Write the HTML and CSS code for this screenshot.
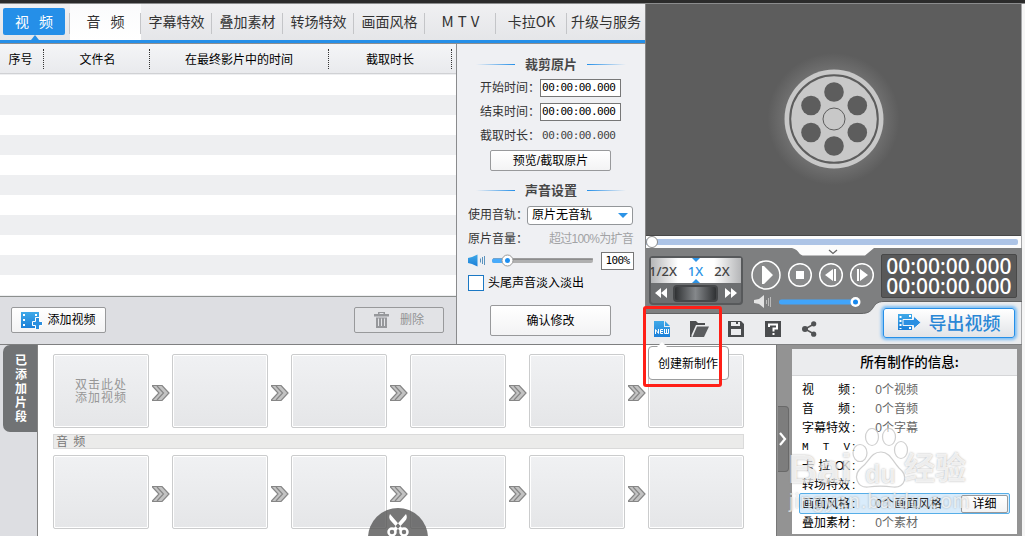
FILE: index.html
```html
<!DOCTYPE html>
<html lang="zh-CN">
<head>
    <meta charset="utf-8">
    <title>视频编辑</title>
    <link rel="stylesheet" href="styles.css">
</head>

<body>

    <svg class="defs" width="0" height="0">
        <defs>
            <linearGradient id="blue" x1="0" y1="0" x2="0" y2="1">
                <stop offset="0" stop-color="#3fa9e8"></stop>
                <stop offset="1" stop-color="#1c7fd8"></stop>
            </linearGradient>
            <symbol id="arrow" viewBox="0 0 18 16">
                <path d="M.5 .5H10L17 8L10 15.500H.5L7 8Z" fill="#c3c3c3"></path>
                <path d="M0 .5H10L17 8L10 15.500H0M0 .5L7 8L0 15.500M5 1L11.500 8L5 15" fill="none" stroke="#868686" stroke-width="1.200"></path>
            </symbol>
        </defs>
    </svg>

    <div class="app">
        <div class="titlebar"></div>

        <div class="upper">
            <!-- left side: tabs, file list and settings -->
            <div class="left">
                <div class="tabs">
                    <div class="tab active"><span>视&ensp; 频</span></div>
                    <div class="tab light">音&ensp; 频</div>
                    <div class="tab">字幕特效</div>
                    <div class="tab">叠加素材</div>
                    <div class="tab">转场特效</div>
                    <div class="tab">画面风格</div>
                    <div class="tab mtv">MTV</div>
                    <div class="tab">卡拉OK</div>
                    <div class="tab last">升级与服务</div>
                </div>

                <div class="work">
                    <div class="files">
                        <div class="file-head">
                            <div class="c1">序号</div>
                            <div class="c2">文件名</div>
                            <div class="c3">在最终影片中的时间</div>
                            <div class="c4">截取时长</div>
                        </div>
                        <div class="file-rows"></div>
                        <div class="file-foot">
                            <div class="btn add">
                                <svg width="22" height="17" viewBox="0 0 22 17">
                                    <rect x="0" y="0" width="18" height="16" fill="url(#blue)"></rect>
                                    <path d="M2 2h2v2H2zM2 7h2v2H2zM2 12h2v2H2zM14 2h2v2h-2z" fill="#fff"></path>
                                    <path d="M14.500 5.500h4v4h3v4h-3v4h-4v-4h-3v-4h3z" fill="#2b8fe0" stroke="#fff" stroke-width="1"></path>
                                </svg>
                                添加视频
                            </div>
                            <div class="btn del">
                                <svg width="15" height="17" viewBox="0 0 15 17" fill="#96989b">
                                    <path d="M4 2V0h7v2h4v2.500H0V2zM5.500 2h4V1h-4z" fill-rule="evenodd"></path>
                                    <path d="M2 5.500h11V16H2zM4 6.500V14h1V6.500zM7 6.500V14h1V6.500zM10 6.500V14h1V6.500z" fill-rule="evenodd"></path>
                                </svg>
                                删除
                            </div>
                        </div>
                    </div>

                    <div class="settings">
                        <div class="heading"><i></i>裁剪原片<i class="r"></i></div>
                        <div class="line">开始时间：<div class="time">00:00:00.000</div></div>
                        <div class="line">结束时间：<div class="time">00:00:00.000</div></div>
                        <div class="line">截取时长：<div class="time plain">00:00:00.000</div></div>
                        <div class="btn preview">预览/截取原片</div>
                        <div class="heading sound"><i></i>声音设置<i class="r"></i></div>
                        <div class="line wide">使用音轨：<div class="select">原片无音轨<b></b></div></div>
                        <div class="line wide">原片音量：<span class="hint">超过100%为扩音</span></div>
                        <div class="line wide volume">
                            <svg width="127" height="16" viewBox="0 0 127 16">
                                <path d="M0 5L4 4L9.500 1.500V13.500L4 11L0 10Z" fill="url(#blue)"></path>
                                <path d="M12.500 5.500v4M14.500 4v7M16.500 3v9" stroke="#5b93be"></path>
                                <rect x="24" y="5.500" width="101" height="4.500" rx="2" fill="#b0b0b0"></rect>
                                <path d="M25 6h100" stroke="#6b6b6b"></path>
                                <rect x="24" y="5.500" width="13" height="4.500" rx="2" fill="#49abfb"></rect>
                                <circle cx="39.500" cy="7.500" r="5.500" fill="#fff" stroke="#999"></circle>
                                <circle cx="39.500" cy="7.500" r="2.500" fill="#1f8ff0"></circle>
                            </svg>
                            <div class="percent">100%</div>
                        </div>
                        <div class="line wide fade"><span class="check"></span>头尾声音淡入淡出</div>
                        <div class="btn confirm">确认修改</div>
                    </div>
                </div>
            </div>

            <!-- right side: preview and player -->
            <div class="right">
                <div class="screen">
                    <svg width="120" height="120" viewBox="0 0 120 120">
                        <circle cx="60" cy="60" r="49.500" fill="#c8c8c8"></circle>
                        <circle cx="60" cy="60" r="43.800" fill="none" stroke="#5d5d5d" stroke-width="2"></circle>
                        <g fill="#5d5d5d">
                            <circle cx="60" cy="33" r="9.800"></circle>
                            <circle cx="83.300" cy="46.500" r="9.800"></circle>
                            <circle cx="83.300" cy="73.500" r="9.800"></circle>
                            <circle cx="60" cy="87" r="9.800"></circle>
                            <circle cx="37" cy="73.500" r="9.800"></circle>
                            <circle cx="37" cy="46.500" r="9.800"></circle>
                        </g>
                        <circle cx="60" cy="60" r="11" fill="none" stroke="#5d5d5d" stroke-width="1"></circle>
                    </svg>
                </div>
                <div class="seek"><div class="bar"></div><span class="knob"></span></div>
                <div class="player">
                    <svg class="player-bg" width="376" height="97" viewBox="0 0 376 97">
                        <path d="M0 0H376V53.500H238C224 53.500 231 65.500 215 65.500H0Z" fill="#7e7f80"></path>
                        <path d="M376 53.500H238C224 53.500 231 65.500 215 65.500H0" fill="none" stroke="#626364"></path>
                        <path d="M146 0H228L219 7.500H158C152 7.500 154 2 146 0Z" fill="#fcfcfc"></path>
                        <path d="M183 2L187 5.500L191 2" fill="none" stroke="#666" stroke-width="1.300"></path>
                    </svg>
                    <div class="controls">
                        <div class="speed">
                            <div class="rates"><span>1/2X</span><span class="on">1X</span><span>2X</span></div>
                            <div class="shuttle">
                                <svg width="12" height="10" viewBox="0 0 12 10"><path d="M6 0V10L0 5ZM12 0V10L6 5Z" fill="#fff"></path></svg>
                                <div class="dial"></div>
                                <svg width="12" height="10" viewBox="0 0 12 10"><path d="M0 0V10L6 5ZM6 0V10L12 5Z" fill="#fff"></path></svg>
                            </div>
                        </div>
                        <svg class="buttons" width="130" height="56" viewBox="0 0 130 56">
                            <g fill="#898a8b" stroke="#fff" stroke-width="1.500">
                                <circle cx="20" cy="19" r="14"></circle>
                                <circle cx="54" cy="19" r="11.300"></circle>
                                <circle cx="85" cy="19" r="11.300"></circle>
                                <circle cx="116" cy="19" r="11.300"></circle>
                            </g>
                            <path d="M16 10h2l9 9l-9 9h-2zM50 15h8v8h-8zM79 19l8-6v12zM88 13h2v12h-2zM122 19l-8-6v12zM111 13h2v12h-2z" fill="#fff"></path>
                            <path d="M8 44l5-1l5-4v13l-5-4l-5-1z" fill="#e4e4e4"></path>
                            <path d="M20.500 44v4M22.500 42v8M24.500 41v10" stroke="#bbb"></path>
                            <rect x="33" y="43.500" width="80" height="5" rx="2.500" fill="#42a5fa"></rect>
                            <circle cx="109.500" cy="46" r="5" fill="#fff"></circle>
                            <circle cx="109.500" cy="46" r="2.500" fill="#1688ee"></circle>
                        </svg>
                        <div class="clock"><div>00:00:00.000</div><div>00:00:00.000</div></div>
                    </div>
                    <div class="toolbar">
                        <svg width="17" height="17" viewBox="0 0 17 17">
                            <path d="M0 0H10V6H16V16H0ZM11 0L16 5H11Z" fill="url(#blue)"></path>
                            <path d="M1.500 13V8.500L4.500 12.500V8M9 8.500H6.500V12.500H9M6.500 10.500H9M10.500 8V12.500H14.500V8M12.500 8V12" fill="none" stroke="#fff"></path>
                        </svg>
                        <svg width="19" height="17" viewBox="0 0 19 17">
                            <path d="M0 0H6L8 2H15V4H6L1.500 14V16H0Z" fill="#4c4e50"></path>
                            <path d="M7 5.500H19L14 16H2.500Z" fill="#5b5d5f"></path>
                        </svg>
                        <svg width="18" height="17" viewBox="0 0 18 17">
                            <path d="M0 0H13L16 3V16H0ZM3 1V5H12V1ZM3 8V14H13V8Z" fill="#4a4c4e" fill-rule="evenodd"></path>
                            <path d="M8 0h2v3H8z" fill="#4a4c4e"></path>
                        </svg>
                        <svg width="18" height="17" viewBox="0 0 18 17">
                            <path d="M0 0H16V16H0Z" fill="#4a4c4e"></path>
                            <path d="M4 6V3.500H12V7.500H8.500V10.500M8.500 12V14" fill="none" stroke="#fff" stroke-width="2"></path>
                        </svg>
                        <svg width="15" height="17" viewBox="0 0 15 17">
                            <path d="M12 3L3 8L12 13" fill="none" stroke="#555" stroke-width="1.500"></path>
                            <g fill="#505254"><circle cx="11.700" cy="2.800" r="2.600"></circle><circle cx="3" cy="8" r="3"></circle><circle cx="11.700" cy="13.200" r="2.600"></circle></g>
                        </svg>
                    </div>
                    <div class="export">
                        <svg width="24" height="17" viewBox="0 0 24 17">
                            <path d="M0 0H14V16H0Z" fill="url(#blue)"></path>
                            <path d="M1.500 2h2v2h-2zM1.500 6h2v2h-2zM1.500 10h2v2h-2zM1.500 14h2v1h-2zM11 1h2v2h-2zM11 13h2v2h-2z" fill="#fff"></path>
                            <path d="M5 5.500H15.500V2L23 8.500L15.500 15V11.500H5Z" fill="#2b8fe2" stroke="#f4f6f9"></path>
                        </svg>
                        导出视频
                    </div>
                </div>
            </div>
        </div>

        <div class="lower">
            <div class="side"><div class="side-tab">已添加片段</div></div>

            <div class="timeline">
                <div class="clips">
                    <div class="clip">双击此处<br>添加视频</div>
                    <svg><use href="#arrow"></use></svg>
                    <div class="clip"></div>
                    <svg><use href="#arrow"></use></svg>
                    <div class="clip"></div>
                    <svg><use href="#arrow"></use></svg>
                    <div class="clip"></div>
                    <svg><use href="#arrow"></use></svg>
                    <div class="clip"></div>
                    <svg><use href="#arrow"></use></svg>
                    <div class="clip"></div>
                </div>
                <div class="audio">音 频</div>
                <div class="clips">
                    <div class="clip"></div>
                    <svg><use href="#arrow"></use></svg>
                    <div class="clip"></div>
                    <svg><use href="#arrow"></use></svg>
                    <div class="clip"></div>
                    <svg><use href="#arrow"></use></svg>
                    <div class="clip"></div>
                    <svg><use href="#arrow"></use></svg>
                    <div class="clip"></div>
                    <svg><use href="#arrow"></use></svg>
                    <div class="clip"></div>
                </div>
            </div>

            <div class="info">
                <div class="handle">
                    <svg width="8" height="14" viewBox="0 0 8 14"><path d="M1 1L6 7L1 13" fill="none" stroke="#fff" stroke-width="2.200"></path></svg>
                </div>
                <div class="card">
                    <div class="card-title">所有制作的信息:</div>
                    <div class="item"><div class="name"><span>视</span><span>频</span></div>:<em>0个视频</em></div>
                    <div class="item"><div class="name"><span>音</span><span>频</span></div>:<em>0个音频</em></div>
                    <div class="item"><div class="name">字幕特效</div>:<em>0个字幕</em></div>
                    <div class="item"><div class="name mono"><span>M</span><span>T</span><span>V</span></div>:</div>
                    <div class="item"><div class="name"><span>卡</span><span>拉</span><span class="ok">OK</span></div>:</div>
                    <div class="item"><div class="name">转场特效</div>:</div>
                    <div class="item selected"><div class="name">画面风格</div>:<em>0个画面风格</em><div class="btn detail">详细</div></div>
                    <div class="item"><div class="name">叠加素材</div>:<em>0个素材</em></div>
                </div>
            </div>
        </div>

        <!-- things floating over the window -->
        <div class="tip">创建新制作</div>
        <div class="mark"></div>
        <div class="scissors">
            <svg width="22" height="24" viewBox="0 0 22 24">
                <path d="M3 0Q1 4 4 7L13 17L16 15ZM19 0Q21 4 18 7L9 17L6 15Z" fill="#fff"></path>
                <circle cx="5" cy="18" r="3.500" fill="none" stroke="#fff" stroke-width="2.500"></circle>
                <circle cx="17" cy="18" r="3.500" fill="none" stroke="#fff" stroke-width="2.500"></circle>
            </svg>
        </div>
        <div class="watermark">
            <svg class="paw" width="60" height="62" viewBox="0 0 60 62">
                <g fill="#fff" fill-opacity=".7" stroke="#c4c4c4" stroke-width="1.200">
                    <ellipse cx="9" cy="25" rx="7" ry="8.500"></ellipse>
                    <ellipse cx="21" cy="9" rx="6.500" ry="8.500"></ellipse>
                    <ellipse cx="38" cy="9" rx="6.500" ry="8.500"></ellipse>
                    <ellipse cx="50" cy="22" rx="6.500" ry="8.500"></ellipse>
                    <path d="M30 24C20 24 18 34 11 39C1 47 6 60 17 59C25 58 34 58 42 59C54 60 58 48 48 40C42 34 39 24 30 24Z"></path>
                </g>
            </svg>
            <span class="bai">Bai</span><span class="du">du</span><span class="jy">经验</span>
            <span class="url">jingyan.baidu.com</span>
        </div>
    </div>

</body>
</html>
```
FILE: styles.css
```css
* {
    box-sizing: border-box;
}

body {
    margin: 0;
    width: 1025px;
    height: 536px;
    overflow: hidden;
    background: #f6f6f6;
    font-family: "Liberation Sans", "Noto Sans CJK SC", sans-serif;
    font-size: 12px;
    line-height: 16px;
    color: #000;
}

.defs {
    position: absolute;
}

.app {
    position: relative;
    width: 1025px;
    height: 536px;
    overflow: hidden;
}

.titlebar {
    height: 4px;
    background: #2b2b2b;
    border-bottom: 1px solid #8b8c8d;
}

.upper {
    display: flex;
    width: 1022px;
    height: 341px;
    border-bottom: 1px solid #7e7f80;
}

.left {
    width: 646px;
    border-right: 1px solid #858585;
}

/* tabs */
.tabs {
    display: flex;
    height: 40px;
    background: linear-gradient(#f0f0f2, #e4e5e8);
    border-bottom: 1px solid #8c8e90;
    box-shadow: inset 0 -3px #258fe8;
    padding-bottom: 5px;
    font-family: "Noto Sans CJK SC", sans-serif;
    font-size: 14px;
    color: #333;
}

.tab {
    position: relative;
    flex: 0 0 71px;
    display: flex;
    align-items: center;
    justify-content: center;
    white-space: pre;
}

.tab:not(.last)::after {
    content: "";
    position: absolute;
    right: 0;
    top: 9px;
    width: 1px;
    height: 21px;
    background: #c4c5c8;
}

.tab.active {
    flex-basis: 70px;
    align-items: flex-start;
    padding: 4px 2px 0 0;
}

.active span {
    width: 62px;
    height: 27px;
    line-height: 26px;
    text-align: center;
    background: #258fe8;
    border-radius: 2px;
    color: #fff;
}

.active::before {
    content: "";
    position: absolute;
    left: 31px;
    top: 31px;
    border: 4px solid transparent;
    border-top: 0;
    border-bottom: 5px solid #258fe8;
}

.tab.light {
    background: linear-gradient(#fafbfc, #fff);
    margin-bottom: -2px;
    padding-bottom: 2px;
}

.tab.mtv {
    font-size: 15px;
    letter-spacing: 4px;
    padding-left: 4px;
}

.tab.last {
    flex-basis: 78px;
}

.work {
    display: flex;
    height: 300px;
}

/* file list */
.files {
    width: 457px;
    border-right: 1px solid #8a8b8d;
}

.file-head {
    display: flex;
    height: 30px;
    align-items: center;
    background: linear-gradient(#f4f5f7, #e9eaed);
    border-bottom: 1px solid #d0d1d4;
    text-align: center;
}

.file-head div {
    height: 20px;
    line-height: 22px;
    border-right: 1px dotted #333;
}

.c1 {
    width: 44px;
    padding-right: 2px;
}

.c2 {
    width: 106px;
    padding-left: 2px;
}

.c3 {
    width: 179px;
}

.c4 {
    width: 123px;
}

.file-rows {
    height: 223px;
    border-bottom: 1px solid #8c8f8e;
    background: repeating-linear-gradient(#eeeff1 0 1px, #fff 1px 21px, #eeeff1 21px 40px);
}

.file-foot {
    display: flex;
    justify-content: space-between;
    height: 47px;
    padding: 10px 12px 0 11px;
    background: #dddee2;
}

.btn {
    display: flex;
    align-items: center;
    justify-content: center;
    border: 1px solid #98999b;
    border-radius: 2px;
    background: linear-gradient(#fff, #f3f3f4);
}

.add {
    width: 95px;
    height: 26px;
    gap: 4px;
}

.del {
    width: 90px;
    height: 26px;
    gap: 11px;
    background: #e2e3e6;
    color: #929395;
}

/* settings */
.settings {
    width: 188px;
    background: #eff0f3;
    color: #333;
}

.heading {
    display: flex;
    align-items: center;
    justify-content: center;
    gap: 10px;
    height: 20px;
    margin: 11px 0 1px;
    font-size: 13px;
    font-weight: bold;
    color: #484848;
}

.heading i {
    width: 39px;
    height: 1px;
    margin-top: -1px;
    background: linear-gradient(to right, #eff0f3, #258fe8);
}

.heading i.r {
    background: linear-gradient(to left, #eff0f3, #258fe8);
}

.line {
    display: flex;
    align-items: center;
    height: 24px;
    padding-left: 23px;
}

.line.wide {
    padding-left: 11px;
}

.time {
    width: 81px;
    height: 18px;
    line-height: 16px;
    padding-left: 1px;
    border: 1px solid #777;
    background: #fff;
    font-family: "DejaVu Sans Mono", monospace;
    font-size: 11px;
    letter-spacing: -.5px;
    color: #000;
}

.time.plain {
    background: none;
    border-color: transparent;
    color: #444;
}

.preview {
    width: 121px;
    height: 21px;
    margin: 2px 0 0 33px;
    color: #000;
}

.heading.sound {
    margin: 10px 0 2px;
}

.select {
    display: flex;
    align-items: center;
    justify-content: space-between;
    width: 106px;
    height: 19px;
    margin-left: -1px;
    padding: 0 4px;
    border: 1px solid #939699;
    border-radius: 3px;
    background: #fff;
    color: #000;
}

.select b {
    border: 5px solid transparent;
    border-top-color: #2c93e6;
    border-bottom: 0;
}

.hint {
    margin-left: 21px;
    white-space: nowrap;
    letter-spacing: -.75px;
    color: #a2a3a5;
}

.volume {
    height: 20px;
    gap: 6px;
}

.percent {
    width: 33px;
    height: 18px;
    border: 1px solid #777;
    background: #fff;
    text-align: center;
    line-height: 16px;
    font-family: "DejaVu Sans Mono", monospace;
    font-size: 11px;
    letter-spacing: -.6px;
    color: #000;
}

.fade {
    gap: 4px;
    color: #000;
}

.check {
    width: 16px;
    height: 16px;
    border: 1px solid #1b78c4;
    background: #fff;
}

.confirm {
    width: 121px;
    height: 31px;
    margin: 10px 0 0 33px;
    color: #000;
}

/* preview */
.right {
    width: 376px;
    border-right: 1px solid #a5a6a8;
}

.screen {
    height: 232px;
    display: flex;
    justify-content: center;
    padding-top: 55px;
    background: radial-gradient(circle at 50% 115px, #747474 45px, #5d5d5d 66px);
    border-bottom: 1px solid #484848;
}

.seek {
    position: relative;
    height: 12px;
    padding: 3px 3px 0 0;
    background: #fcfcfc;
}

.bar {
    height: 6px;
    background: #adc4e6;
    border-radius: 0 2px 2px 0;
}

.knob {
    position: absolute;
    left: 0;
    top: 0;
    width: 12px;
    height: 12px;
    border: 1px solid #8a8a8a;
    border-radius: 50%;
    background: #fff;
}

.player {
    position: relative;
    height: 96px;
    background: #ebecee;
}

.player-bg {
    position: absolute;
    left: 0;
    top: 0;
}

.controls {
    position: relative;
    display: flex;
    height: 66px;
    padding: 8px 4px 0 3px;
}

.speed {
    width: 94px;
    height: 49px;
    border: 2px solid #57595b;
    border-radius: 4px;
    background: #6d6f71;
}

.rates {
    position: relative;
    display: flex;
    align-items: center;
    height: 25px;
    gap: 11px;
    overflow: hidden;
    background: linear-gradient(to right, #b5b6b8, #fff 30%, #fff 70%, #b5b6b8);
    font-family: "Noto Sans", sans-serif;
    font-size: 13px;
    font-weight: 500;
    color: #444;
}

.rates span:first-child {
    margin-left: -2px;
}

.rates .on {
    color: #2c93e6;
}

.rates::before,
.rates::after {
    content: "";
    position: absolute;
    left: 41px;
    border: 4px solid transparent;
}

.rates::before {
    top: 0;
    border-top-color: #2c93e6;
    border-bottom: 0;
}

.rates::after {
    bottom: 0;
    border-bottom-color: #2c93e6;
    border-top: 0;
}

.shuttle {
    display: flex;
    align-items: center;
    justify-content: space-between;
    height: 20px;
    padding: 0 4px;
}

.dial {
    width: 45px;
    height: 17px;
    border: 2px solid #454749;
    border-radius: 4px;
    background: linear-gradient(to right, #303234, #85888b 50%, #303234);
}

.buttons {
    margin-left: 3px;
    flex: none;
}

.clock {
    width: 137px;
    height: 44px;
    margin: -2px 0 0 5px;
    padding-top: 1px;
    border: 1px solid #484848;
    border-radius: 2px;
    background: #595959;
    color: #fff;
    font-family: "Noto Sans", sans-serif;
    font-size: 21px;
    font-weight: 500;
    line-height: 20px;
    text-align: center;
}

.toolbar {
    display: flex;
    align-items: center;
    height: 30px;
    padding-left: 8px;
    gap: 19px;
}

.export {
    position: absolute;
    right: 6px;
    top: 60px;
    display: flex;
    align-items: center;
    justify-content: center;
    gap: 7px;
    width: 132px;
    height: 30px;
    padding-bottom: 2px;
    border: 1px solid #258fe8;
    border-radius: 3px;
    background: linear-gradient(#fff, #e2e4e8);
    box-shadow: 0 0 3px 2px #7cbef5;
    font-family: "Noto Sans CJK SC", sans-serif;
    font-size: 18px;
    font-weight: 500;
    color: #2a87d6;
}

/* lower part */
.lower {
    display: flex;
    width: 1022px;
    height: 191px;
}

.side {
    width: 38px;
    padding-left: 3px;
    background: #dddee2;
    border-right: 1px solid #858585;
}

.side-tab {
    width: 34px;
    height: 87px;
    padding: 8px 10px 0 12px;
    background: #717375;
    border-radius: 7px 0 0 7px;
    color: #fff;
    font-family: "Noto Sans CJK SC", sans-serif;
    font-weight: bold;
    line-height: 14px;
}

.timeline {
    width: 738px;
    padding: 9px 0 0 15px;
    background: #fff;
}

.clips {
    display: flex;
    align-items: center;
    height: 74px;
}

.clips svg {
    width: 18px;
    height: 16px;
    margin: 3px 2px 0 3px;
}

.clip {
    width: 96px;
    height: 74px;
    padding-top: 24px;
    border: 1px solid #cbcccd;
    border-radius: 2px;
    background: linear-gradient(#f0f1f3, #e5e6e8);
    box-shadow: inset 0 0 0 1px #fff;
    color: #979797;
    line-height: 13px;
    letter-spacing: 1px;
    text-align: center;
}

.audio {
    width: 691px;
    height: 15px;
    margin: 6px 0;
    padding-left: 2px;
    border: 1px solid #dadada;
    background: #ebebea;
    color: #777;
    line-height: 15px;
    letter-spacing: 1px;
}

.info {
    display: flex;
    width: 246px;
    padding-top: 4px;
    background: #939393;
    border-left: 1px solid #777;
}

.handle {
    display: flex;
    align-items: center;
    justify-content: center;
    width: 11px;
    height: 66px;
    margin: 57px 3px 0 1px;
    background: #7d7d7d;
    border: 1px solid #696969;
    border-left: 0;
    border-radius: 0 4px 4px 0;
}

.card {
    width: 225px;
    height: 185px;
    background: #fff;
}

.card-title {
    height: 27px;
    margin-bottom: 4px;
    padding-left: 10px;
    background: #ebecee;
    border-bottom: 1px solid #d5d6d8;
    text-align: center;
    line-height: 24px;
    font-family: "Noto Sans CJK SC", sans-serif;
    font-size: 13.5px;
    font-weight: 500;
}

.item {
    display: flex;
    align-items: center;
    height: 19px;
    padding-left: 10px;
}

.name {
    display: flex;
    justify-content: space-between;
    width: 48px;
    margin-right: 2px;
    white-space: nowrap;
}

.mono {
    font-family: "Liberation Mono", monospace;
    font-size: 11px;
}

.ok {
    letter-spacing: -2px;
    padding-right: 2px;
}

.item em {
    margin-left: 20px;
    font-style: normal;
    color: #666;
}

.item.selected {
    height: 21px;
    margin: -1px 7px -1px 7px;
    padding: 0 1px 0 2px;
    border: 1px solid #56aee8;
    border-radius: 2px;
    background: #d9ecfb;
}

.selected em {
    color: #222;
}

.detail {
    width: 47px;
    height: 18px;
    margin-left: auto;
}

/* floating */
.tip {
    position: absolute;
    left: 648px;
    top: 346px;
    width: 81px;
    height: 34px;
    padding: 9px 0 0 9px;
    border: 1px solid #9c9d9e;
    border-radius: 4px;
    background: #fff;
}

.tip::before {
    content: "";
    position: absolute;
    left: 8px;
    top: -5px;
    border: 5px solid transparent;
    border-top: 0;
    border-bottom-color: #fff;
}

.mark {
    position: absolute;
    left: 643px;
    top: 306px;
    width: 79px;
    height: 81px;
    border: 3px solid #ff1f17;
    border-radius: 3px;
}

.scissors {
    position: absolute;
    left: 368px;
    top: 508px;
    width: 60px;
    height: 60px;
    padding-top: 6px;
    border-radius: 50%;
    background: rgba(85, 85, 85, .8);
    text-align: center;
}

.watermark {
    position: absolute;
    left: 785px;
    top: 425px;
    width: 190px;
    height: 100px;
    font-weight: bold;
    color: rgba(255, 255, 255, .8);
    text-shadow: 0 0 2px #999;
    opacity: .8;
}

.watermark span,
.paw {
    position: absolute;
    line-height: 1;
}

.paw {
    left: 66px;
    top: 3px;
}

.bai {
    left: 3px;
    top: 24px;
    font-size: 41px;
}

.du {
    left: 80px;
    top: 37px;
    font-size: 25px;
}

.jy {
    left: 119px;
    top: 28px;
    font-size: 31px;
}

.url {
    left: 4px;
    top: 66px;
    font-size: 20px;
    letter-spacing: 1.2px;
    font-weight: normal;
}
```
